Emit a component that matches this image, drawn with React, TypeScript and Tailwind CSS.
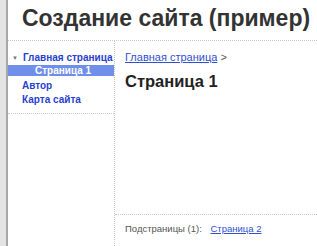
export default function App() {
  return (
    <div className="flex h-[246px] w-[317px] overflow-hidden bg-white font-['Liberation_Sans',Arial,sans-serif]">
      {/* left frame strip */}
      <div className="w-[8px] shrink-0 border-r-2 border-[#a8a8a8] bg-[#e4e4e4]" />

      <div className="flex min-w-0 flex-1 flex-col">
        {/* header */}
        <div className="h-[41px] shrink-0 border-b border-dotted border-[#c8c8c8] pl-[14px] pt-[4px]">
          <h1 className="whitespace-nowrap text-[23px] font-bold leading-[28px] text-[#333]">
            Создание сайта (пример)
          </h1>
        </div>

        <div className="flex flex-1">
          {/* sidebar */}
          <div className="w-[107px] shrink-0 border-r border-dotted border-[#c8c8c8]">
            <div className="whitespace-nowrap border-b border-dotted border-[#c8c8c8] pt-[11px] pb-[7px] text-[10px] font-bold leading-[12px]">
              <div className="flex items-center text-[#2a3fcf]">
                <span className="ml-[4px] mr-[5px] text-[6px] text-[#777]">▼</span>
                <span>Главная страница</span>
              </div>
              <div className="mt-[1px] bg-[#6f8fea] pl-[27px] leading-[11px] text-white">Страница 1</div>
              <div className="mt-[4px] pl-[14px] text-[#2a3fcf]">Автор</div>
              <div className="mt-[2px] pl-[14px] text-[#2a3fcf]">Карта сайта</div>
            </div>
          </div>

          {/* content */}
          <div className="flex flex-1 flex-col">
            <div className="flex-1 pl-[10px] pt-[9px]">
              <div className="text-[11px] leading-[14px] text-[#555]">
                <a className="text-[#3050d0] underline">Главная страница</a> &gt;
              </div>
              <h2 className="mt-[7px] text-[16.5px] font-bold leading-[20px] text-[#222]">Страница 1</h2>
            </div>
            <div className="h-[32px] border-t border-dotted border-[#c8c8c8] pl-[10px] pt-[8px] text-[9.5px] leading-[12px] text-[#555]">
              Подстраницы (1):{" "}
              <a className="ml-[6px] text-[#3050d0] underline">Страница 2</a>
            </div>
          </div>
        </div>
      </div>
    </div>
  );
}
